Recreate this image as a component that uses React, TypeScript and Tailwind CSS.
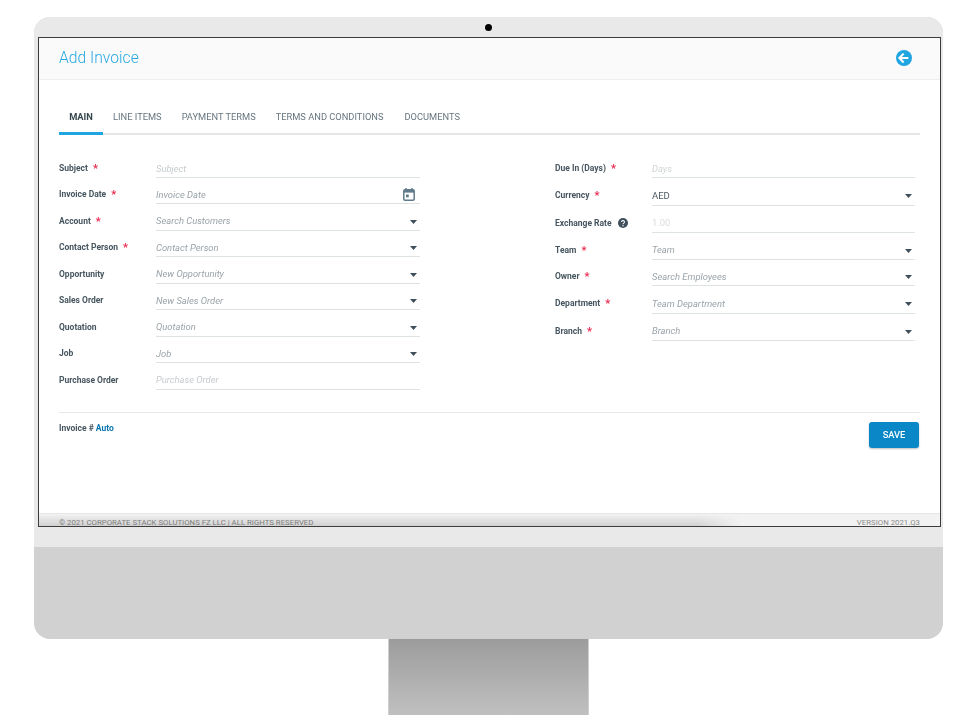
import React from "react";

const Caret = () => (
  <svg width="7" height="4" viewBox="0 0 7 4" className="shrink-0">
    <path d="M0 0h7L3.5 4z" fill="#3f4f5c" />
  </svg>
);

const Star = () => <span className="ml-[5px] text-[11px] leading-none text-[#e8294f]">*</span>;

type Row = { label: string; req?: boolean; help?: boolean; ph: string; tone?: string; caret?: boolean; cal?: boolean; h: string };

const left: Row[] = [
  { label: "Subject", req: true, ph: "Subject", tone: "text-[#c6cbce]", h: "h-[26px]" },
  { label: "Invoice Date", req: true, ph: "Invoice Date", cal: true, h: "h-[26px]" },
  { label: "Account", req: true, ph: "Search Customers", caret: true, h: "h-[27px]" },
  { label: "Contact Person", req: true, ph: "Contact Person", caret: true, h: "h-[26px]" },
  { label: "Opportunity", ph: "New Opportunity", caret: true, h: "h-[27px]" },
  { label: "Sales Order", ph: "New Sales Order", caret: true, h: "h-[26px]" },
  { label: "Quotation", ph: "Quotation", caret: true, h: "h-[27px]" },
  { label: "Job", ph: "Job", caret: true, h: "h-[26px]" },
  { label: "Purchase Order", ph: "Purchase Order", tone: "text-[#c6cbce]", h: "h-[27px]" },
];

const right: Row[] = [
  { label: "Due In (Days)", req: true, ph: "Days", tone: "text-[#d0d4d6]", h: "h-[26px]" },
  { label: "Currency", req: true, ph: "AED", tone: "not-italic text-[#4a5963]", caret: true, h: "h-[28px]" },
  { label: "Exchange Rate", help: true, ph: "1.00", tone: "not-italic text-[#d8dbdd]", h: "h-[27px]" },
  { label: "Team", req: true, ph: "Team", caret: true, h: "h-[27px]" },
  { label: "Owner", req: true, ph: "Search Employees", caret: true, h: "h-[26px]" },
  { label: "Department", req: true, ph: "Team Department", caret: true, h: "h-[28px]" },
  { label: "Branch", req: true, ph: "Branch", caret: true, h: "h-[27px]" },
];

function Field({ r }: { r: Row }) {
  return (
    <div className={`flex items-stretch ${r.h}`}>
      <div className="flex w-[97px] shrink-0 items-center pt-[7px] text-[8.5px] font-bold text-[#46555f]">
        {r.label}
        {r.req && <Star />}
        {r.help && (
          <svg width="10" height="10" viewBox="0 0 24 24" className="ml-[6px]">
            <circle cx="12" cy="12" r="12" fill="#3f4f5c" />
            <path d="M8.5 9.5a3.5 3.5 0 1 1 5.4 2.9c-1.2.8-1.9 1.4-1.9 2.6" fill="none" stroke="#fff" strokeWidth="2.6" />
            <circle cx="12" cy="18.6" r="1.6" fill="#fff" />
          </svg>
        )}
      </div>
      <div className={`flex flex-1 items-center justify-between border-b border-[#dde3e4] pt-[9px] pr-[3.5px] text-[9.4px] italic ${r.tone ?? "text-[#9aa3a9]"}`}>
        <span className={r.ph === "AED" ? "text-[9.5px]" : ""}>{r.ph}</span>
        {r.caret && <Caret />}
        {r.cal && (
          <svg width="12" height="13" viewBox="0 0 12 13" className="mr-[2px] mb-[2px]">
            <path d="M3 0v2M9 0v2" stroke="#5f7a8a" strokeWidth="1.4" />
            <rect x="0.8" y="1.8" width="10.4" height="10.4" rx="1.2" fill="none" stroke="#5f7a8a" strokeWidth="1.5" />
            <rect x="1" y="2" width="10" height="2.6" fill="#5f7a8a" />
            <rect x="3" y="6.5" width="2.8" height="2.8" fill="#5f7a8a" />
          </svg>
        )}
      </div>
    </div>
  );
}

export default function App() {
  return (
    <div className="h-[715px] w-[971px] overflow-hidden bg-white pt-[17px] pl-[34px] font-['Roboto',sans-serif]">
      <div className="w-[909px]">
        <div className="relative h-[622px] overflow-hidden rounded-[16px] bg-[#d1d1d1]">
          <div className="absolute top-[7px] left-[451px] h-[7px] w-[7px] rounded-full bg-black" />
          <div className="flex h-[530px] flex-col bg-[#e9e9e9] pt-[20px] pr-[2px] pl-[4px]">
            <div className="relative flex h-[490px] flex-col overflow-hidden border-[1.5px] border-[#3c3c3c] bg-white">
              <div className="flex h-[42px] shrink-0 items-center justify-between border-b border-[#eeeeee] bg-[#fafafa] pr-[28px] pb-[2px] pl-[20px]">
                <span className="text-[15.7px] font-light text-[#29a9e1] blur-[0.2px]">Add Invoice</span>
                <svg width="16" height="16" viewBox="0 0 16 16">
                  <circle cx="8" cy="8" r="8" fill="#1fa5e0" />
                  <path d="M7.6 3.6 3.4 8l4.2 4.4M3.8 8h8.6" fill="none" stroke="#fff" strokeWidth="2.1" />
                </svg>
              </div>

              <div className="flex flex-1 flex-col px-[20px] blur-[0.3px]">
                <div className="mt-[26px] flex h-[29px] shrink-0 items-start border-b-2 border-[#e5e5e5] text-[9.3px] text-[#67767f]">
                  <div className="-mb-[2px] h-[29px] w-[44px] border-b-[3px] border-[#1fa5e0] pt-[4px] text-center font-bold text-[#37474f]">MAIN</div>
                  <div className="ml-[10px] pt-[4px]">LINE ITEMS</div>
                  <div className="ml-[20px] pt-[4px]">PAYMENT TERMS</div>
                  <div className="ml-[20px] pt-[4px]">TERMS AND CONDITIONS</div>
                  <div className="ml-[21px] pt-[4px]">DOCUMENTS</div>
                </div>

                <div className="mt-[17px] flex shrink-0 items-start">
                  <div className="flex w-[361px] flex-col">
                    {left.map((r) => (
                      <Field key={r.label} r={r} />
                    ))}
                  </div>
                  <div className="ml-[135px] flex w-[360px] flex-col">
                    {right.map((r) => (
                      <Field key={r.label} r={r} />
                    ))}
                  </div>
                </div>

                <div className="mt-[22px] flex shrink-0 justify-between border-t border-[#e8e8e8] pt-[9px] pr-[1px]">
                  <div className="text-[8.5px] font-bold text-[#46555f]">
                    Invoice # <span className="text-[#0a76b0]">Auto</span>
                  </div>
                  <button className="h-[26px] w-[50px] rounded-[3px] bg-[#0a87c6] text-[9.3px] font-medium text-white shadow-[0_1px_2px_rgba(0,0,0,0.25)]">
                    SAVE
                  </button>
                </div>
              </div>

              <div className="relative h-[13px] shrink-0 overflow-hidden border-t border-[#e6e6e6] bg-[#f2f2f2]">
                <div className="flex justify-between px-[20px] pt-[4px] text-[7.8px] leading-[10px] text-[#8a8a8a]">
                  <span>© 2021 CORPORATE STACK SOLUTIONS FZ LLC | ALL RIGHTS RESERVED</span>
                  <span>VERSION 2021.Q3</span>
                </div>
                <div className="absolute inset-0 bg-gradient-to-b from-transparent to-[#00000022] [mask-image:linear-gradient(to_right,black_73%,transparent_78%)]" />
              </div>
            </div>
          </div>
        </div>
        <div className="ml-[354px] h-[76px] w-[201px] border-x border-[#cfcfcf] bg-gradient-to-b from-[#9c9c9c] to-[#c0c0c0]" />
      </div>
    </div>
  );
}
